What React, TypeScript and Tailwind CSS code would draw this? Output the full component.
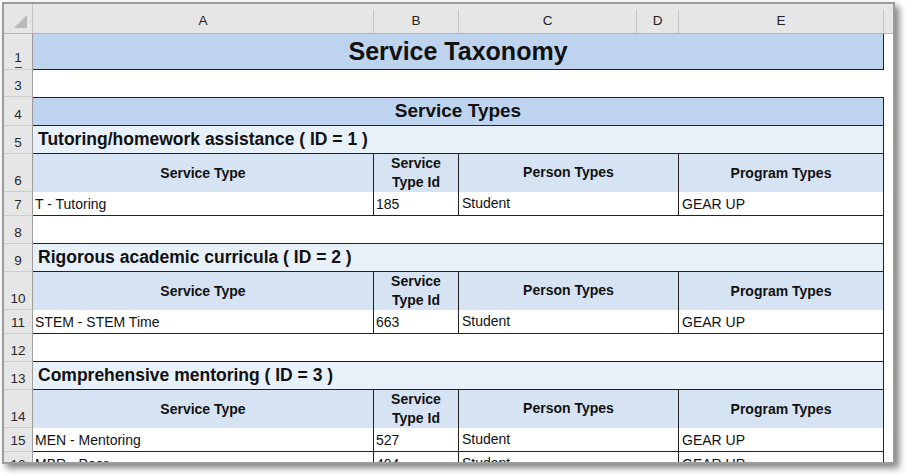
type Row = [string, string, string, string]

interface Section {
  start: number
  title: string
  rows: Row[]
}

const SECTIONS: Section[] = [
  { start: 5, title: 'Tutoring/homework assistance ( ID = 1 )', rows: [['T - Tutoring', '185', 'Student', 'GEAR UP']] },
  { start: 9, title: 'Rigorous academic curricula ( ID = 2 )', rows: [['STEM - STEM Time', '663', 'Student', 'GEAR UP']] },
  {
    start: 13,
    title: 'Comprehensive mentoring ( ID = 3 )',
    rows: [
      ['MEN - Mentoring', '527', 'Student', 'GEAR UP'],
      ['MBR - Peer', '404', 'Student', 'GEAR UP'],
    ],
  },
]

const COLS: { key: string; w: string }[] = [
  { key: 'A', w: 'w-[341px]' },
  { key: 'B', w: 'w-[85px]' },
  { key: 'C', w: 'w-[178px]' },
  { key: 'D', w: 'w-[42px]' },
  { key: 'E', w: 'w-[205px]' },
]

function Line({ n, h, children, mark }: { n: number; h: string; children?: React.ReactNode; mark?: boolean }) {
  return (
    <div className={`flex shrink-0 ${h}`}>
      <div className="w-[29px] shrink-0 bg-[#e6e6e6] border-r border-b border-r-[#9c9c9c] border-b-[#cdcdcd] flex flex-col items-center justify-end pb-[2px] text-[13.5px] leading-[16px] text-[#262626]">
        <span>{n}</span>
        {mark && <span className="w-[7px] h-px bg-[#444] mt-[1px] -mb-[1px]" />}
      </div>
      <div className="w-[851px] shrink-0">{children}</div>
      <div className="flex-1 bg-white" />
    </div>
  )
}

function TableHeader() {
  return (
    <div className="grid grid-cols-[340px_85px_220px_206px] h-full bg-[#d5e3f3] font-bold text-[14px] leading-[19px] text-[#111]">
      <div className="border-b border-[#222] flex items-center justify-center">Service Type</div>
      <div className="border-b border-l border-[#222] flex items-center justify-center text-center">
        Service<br />Type Id
      </div>
      <div className="border-b border-l border-[#222] flex items-center justify-center pb-[2px]">Person Types</div>
      <div className="border-b border-x border-[#222] flex items-center justify-center">Program Types</div>
    </div>
  )
}

function DataRow({ r }: { r: Row }) {
  return (
    <div className="grid grid-cols-[340px_85px_220px_206px] h-full bg-white text-[14px] leading-[18px] text-[#111]">
      <div className="border-b border-[#222] flex items-center pl-[2px]">{r[0]}</div>
      <div className="border-b border-l border-[#222] flex items-center pl-[2px]">{r[1]}</div>
      <div className="border-b border-l border-[#222] flex items-center pl-[3px] pb-[2px]">{r[2]}</div>
      <div className="border-b border-x border-[#222] flex items-center pl-[3px]">{r[3]}</div>
    </div>
  )
}

export default function App() {
  return (
    <div className="w-[909px] h-[476px] bg-white font-['Liberation_Sans',Arial,sans-serif] pt-[2px] pl-[2px]">
      <div className="w-[893px] h-[462px] border-2 border-[#9b9b9b] bg-white overflow-hidden flex flex-col shadow-[4px_4px_7px_rgba(0,0,0,0.5)]">
        {/* column letters */}
        <div className="flex h-[30px] shrink-0 bg-[#e6e6e6] border-b border-[#b4b4b4]">
          <div className="w-[29px] shrink-0 border-r border-[#c4c4c4]">
            <svg width="28" height="29" viewBox="0 0 28 29">
              <polygon points="23,11 23,24 10,24" fill="#b9b9b9" />
            </svg>
          </div>
          {COLS.map(c => (
            <div key={c.key} className={`${c.w} shrink-0 flex items-end`}>
              <div className="w-full h-[23px] border-r border-[#c4c4c4] flex items-center justify-center text-[13.5px] text-[#222] font-medium">
                {c.key}
              </div>
            </div>
          ))}
          <div className="flex-1" />
        </div>

        <Line n={1} h="h-[36px]" mark>
          <div className="h-full bg-[#bed4ee] border-r border-b border-[#222] flex items-center justify-center font-bold text-[25px] text-[#111]">
            Service Taxonomy
          </div>
        </Line>
        <Line n={3} h="h-[27px]" />
        <Line n={4} h="h-[29px]">
          <div className="h-full bg-[#bed4ee] border-y border-r border-[#222] flex items-center justify-center font-bold text-[19px] text-[#111]">
            Service Types
          </div>
        </Line>

        {SECTIONS.map(s => (
          <div key={s.start} className="contents">
            <Line n={s.start} h="h-[28px]">
              <div className="h-full bg-[#e8f0fa] border-r border-b border-[#222] flex items-center pl-[5px] font-bold text-[17.5px] text-[#111]">
                {s.title}
              </div>
            </Line>
            <Line n={s.start + 1} h="h-[38px]">
              <TableHeader />
            </Line>
            {s.rows.map((r, i) => (
              <Line key={r[0]} n={s.start + 2 + i} h="h-[24px]">
                <DataRow r={r} />
              </Line>
            ))}
            {s.start < 13 && (
              <Line n={s.start + 3} h="h-[28px]">
                <div className="h-full bg-white border-r border-b border-[#222]" />
              </Line>
            )}
          </div>
        ))}
      </div>
    </div>
  )
}
